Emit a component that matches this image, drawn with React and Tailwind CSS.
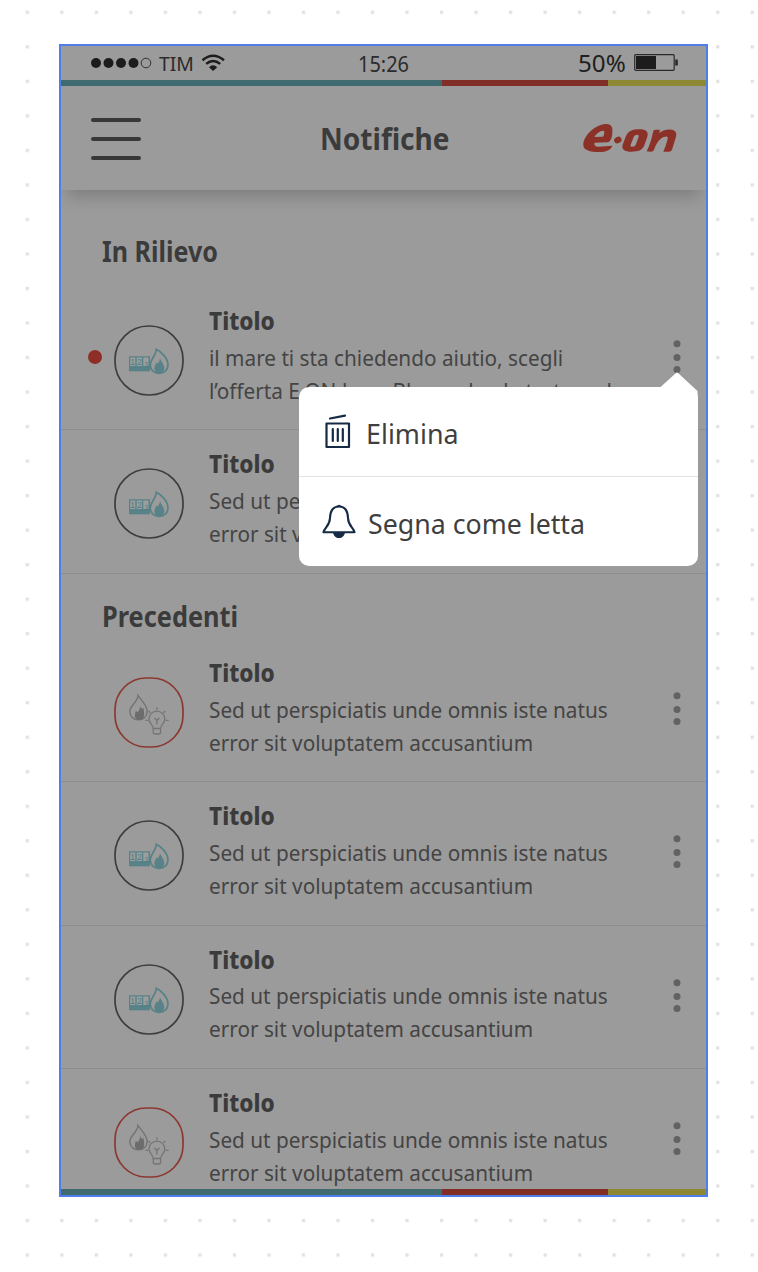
const sed = ["Sed ut perspiciatis unde omnis iste natus", "error sit voluptatem accusantium"];
const rowsTop = [
  { kind: "meter", unread: true, lines: ["il mare ti sta chiedendo aiutio, scegli", "l’offerta E.ON Luce Blu e salvada tartarughe"] },
  { kind: "meter", lines: sed },
];
const rowsPast = [
  { kind: "bulb", lines: sed },
  { kind: "meter", lines: sed },
  { kind: "meter", lines: sed },
  { kind: "bulb", lines: sed },
];

function MeterIcon() {
  return (
    <svg width="70" height="71" viewBox="0 0 70 71" fill="none">
      <rect x="1" y="1" width="68" height="69" rx="33.5" stroke="#3d3d3d" strokeWidth="1.7" />
      <path d="M15 31.300H36V46.300H15Z" fill="#578287" />
      <path d="M16.300 32.600h5v8.400h-5zM22.700 32.600h5.200v8.400h-5.200zM29.300 32.600h5.200v8.400h-5.200z" fill="#9b9fa0" />
      <g fill="#4f7d82" fontSize="8.500" fontFamily="Liberation Sans, sans-serif">
        <text x="16.300" y="40">1</text>
        <text x="22.900" y="40">2</text>
        <text x="30.500" y="41.600" fontSize="6.500">3</text>
      </g>
      <path d="M42.300 24.300C47 26.500 54 33 54 40c0 5-4 8.300-8.900 8.300S36.300 45 36.300 40C36.300 34.500 42.300 30 42.300 24.300Z" stroke="#578287" strokeWidth="1.700" fill="#9b9b9b" />
      <path d="M46 33c.5 3 4.300 6 4.300 10.300 0 2.700-2 5-5 5s-5-2.300-4.900-5c.1-2.300 1.400-4 2.300-6l1.100 1.300c1-1.300 1.900-3 2.200-5.600Z" fill="#578287" />
    </svg>
  );
}

function BulbIcon() {
  return (
    <svg width="70" height="71" viewBox="0 0 70 71" fill="none">
      <rect x="1" y="1" width="68" height="69" rx="31.5" stroke="#8c3830" strokeWidth="1.700" />
      <path d="M24 18.500C26 22 33.200 28 33.200 34.500c0 5-3.900 8.400-8.800 8.400s-8.500-3.400-8.500-8.400c0-6 7.900-9.500 8.100-16Z" stroke="#737373" strokeWidth="1.400" />
      <path d="M26.500 28c0 2.500 1.300 4 1.800 4l1-1.500c.3 2 1 4.500.9 7.500-.1 3-2 4.800-4.900 4.800s-4.600-1.800-4.400-4.500c.1-2 .7-3.100.9-4.500l1.700 1.400c1.800-1.500 2.700-4 3-7.200Z" fill="#6c6c6c" />
      <g stroke="#757575" strokeWidth="1.300">
        <path d="M39.200 51.500c0-3.500-4.200-5-4.200-9.500a7.900 7.900 0 0 1 15.800 0c0 4.500-4.200 6-4.200 9.500ZM39.200 51.500v3.500q0 2 2 2h3.400q2 0 2-2v-3.500M40.400 41l2.500 2.500 2.500-2.500M42.900 43.500v4M42.900 30.200v2.600M34.500 34l1.800 1.800M51.300 34l-1.800 1.800M31.500 43.300h2.700M51.800 43.300h2.900" />
      </g>
    </svg>
  );
}

function Logo() {
  return (
    <svg width="104" height="40" viewBox="0 0 312 120" fill="#8b3128" fillRule="evenodd">
      <path d="M16 78C18 50 55 18 86 18C101 18 105 30 103 44C102 60 98 71 88 73L50 74C47 81 52 86 62 86L103 83C99 96 83 102 65 102C35 102 14 97 16 78ZM49 57C54 47 68 37 76 38C81 39 79 50 75 56Z" />
      <ellipse cx="119.500" cy="66" rx="11.500" ry="9.500" transform="rotate(-25 119.500 66)" />
      <path d="M143 56C150 39 164 34 184 34C205 34 212 42 208 56L199 82C193 98 180 101 160 101C140 101 130 94 134 80ZM168 55Q170 50 178 50Q184 50 182 56L173 81Q171 86 163 86Q156 86 158 80Z" />
      <path d="M226 38Q228 35 234 35L246 35L243 45C256 36 270 33 280 35C293 37 297 45 294 56L282 95Q280 101 272 101L256 101Q263 86 269 63C271 54 265 54 257 57C243 63 235 76 228 95Q226 101 219 101L206 100Q219 74 226 38Z" />
    </svg>
  );
}

function Row({ item, last }) {
  return (
    <div className={last ? "relative flex h-[143.3px] shrink-0" : "relative flex h-[143.3px] shrink-0 border-b-[1.5px] border-[#8d8d8d]"}>
      <div className="flex w-[53px] shrink-0 justify-center pt-[63px] pl-[15px]">
        {item.unread && <span className="size-[14px] rounded-full bg-[#8e2f27]" />}
      </div>
      <div className="w-[95px] shrink-0 pt-[38px]">{item.kind === "meter" ? <MeterIcon /> : <BulbIcon />}</div>
      <div className="w-[415px] shrink-0 pt-[17px] whitespace-nowrap text-[#444]">
        <div className="h-[36.800px] origin-left scale-x-[0.94] text-[24px] leading-[34px] font-extrabold text-[#3b3b3b]">Titolo</div>
        {item.lines.map((line) => (
          <div key={line} className="h-[33px] w-[470px] origin-left scale-x-[0.943] text-[22px] leading-[33px]">{line}</div>
        ))}
      </div>
      <svg className="mt-[50px] ml-[48px] shrink-0" width="10" height="40" fill="#626262">
        <circle cx="5" cy="6.700" r="3.500" />
        <circle cx="5" cy="20.500" r="3.500" />
        <circle cx="5" cy="32.500" r="3.500" />
      </svg>
    </div>
  );
}

function Stripe({ className }) {
  return (
    <div className={className}>
      <div className="w-[381px] bg-[#3f6b70]" />
      <div className="w-[166px] bg-[#812e27]" />
      <div className="flex-1 bg-[#8c8834]" />
    </div>
  );
}

export default function App() {
  return (
    <div className="relative h-[1272px] w-[758px] overflow-hidden bg-white pt-[44px] pl-[59px] font-['Noto_Sans',sans-serif]">
      <svg className="absolute inset-0" width="758" height="1272">
        <defs>
          <pattern id="dots" x="25.700" y="10.700" width="34.520" height="34.520" patternUnits="userSpaceOnUse">
            <rect width="3.300" height="3.300" fill="#e2e2e2" />
          </pattern>
        </defs>
        <rect x="20" y="5" width="738" height="1267" fill="url(#dots)" />
      </svg>
      <div className="relative flex h-[1153px] w-[649px] flex-col overflow-hidden border-2 border-[#4f7eea] bg-[#9b9b9b]">
        <div className="relative z-10 shrink-0 bg-[#9b9b9b] shadow-[0_12px_16px_-6px_rgba(0,0,0,0.2)]">
          <div className="flex h-[33.500px] items-center text-[#202020]">
            <svg className="ml-[30px]" width="62" height="14" fill="#1c1c1c">
              <circle cx="5" cy="7" r="5" />
              <circle cx="17.500" cy="7" r="5" />
              <circle cx="30" cy="7" r="5" />
              <circle cx="42.500" cy="7" r="5" />
              <circle cx="55" cy="7" r="4.800" fill="none" stroke="#333" />
            </svg>
            <div className="ml-[6px] w-[42px] origin-left scale-x-[0.97] pt-[3px] text-[20px] leading-[30px] text-[#2b2b2b]">TIM</div>
            <svg width="24" height="17" viewBox="0 0 24 17" fill="none" stroke="#1c1c1c" strokeWidth="2.500">
              <path d="M1.500 6.200Q12-2.600 23 6.200M5.200 9.900Q12 4 19.200 9.900" />
              <path d="M8 13.200Q12 9.500 16.200 13.200L12.100 17Z" fill="#1c1c1c" stroke="none" />
            </svg>
            <div className="ml-[133px] w-[220px] origin-left scale-x-[0.95] pt-[2px] text-[21px] leading-[30px] text-[#2b2b2b]">15:26</div>
            <div className="w-[56px] origin-left scale-x-[1.05] text-[23px] leading-[30px]">50%</div>
            <svg width="44" height="17" fill="none" stroke="#2a2a2a">
              <rect x=".7" y=".7" width="39.500" height="15.600" rx="1" strokeWidth="1.200" />
              <rect x="2" y="2" width="20" height="13" fill="#1c1c1c" stroke="none" />
              <path d="M42.500 5.500v6" strokeWidth="2.600" />
            </svg>
          </div>
          <Stripe className="flex h-[6.500px]" />
          <div className="flex h-[104px] items-center">
            <div className="mt-px ml-[30px] flex w-[50px] flex-col gap-[15px]">
              <div className="h-[4px] rounded-full bg-[#383838]" />
              <div className="h-[4px] rounded-full bg-[#383838]" />
              <div className="h-[4px] rounded-full bg-[#383838]" />
            </div>
            <div className="ml-[179px] w-[258px] origin-left scale-x-[0.905] text-[31px] leading-[44px] font-bold text-[#3b3b3b]">Notifiche</div>
            <Logo />
          </div>
        </div>
        <div className="h-[97.200px] shrink-0 pt-[37px] pl-[41px] text-[28px] leading-[48px] font-bold text-[#3b3b3b]">
          <div className="origin-left scale-x-[0.895]">In Rilievo</div>
        </div>
        {rowsTop.map((r, i) => <Row key={i} item={r} />)}
        <div className="h-[65.300px] shrink-0 pt-[18.500px] pl-[41px] text-[28px] leading-[48px] font-bold text-[#3b3b3b]">
          <div className="origin-left scale-x-[0.905]">Precedenti</div>
        </div>
        {rowsPast.map((r, i) => <Row key={i} item={r} last={i === 3} />)}
        <Stripe className="absolute inset-x-0 bottom-0 flex h-[6px]" />
        <div className="absolute top-[341px] left-[238px] z-20 h-[179px] w-[399px] rounded-[10px] bg-white text-[#3f3f3f]">
          <svg className="absolute -top-[15px] right-0" width="38" height="24" fill="#fff">
            <path d="M16 1Q17 0 18 1L37.500 19V24H0V15.500Z" />
          </svg>
          <div className="flex h-[90px] items-center border-b-[1.500px] border-[#e3e3e3]">
            <svg className="ml-[25px]" width="28" height="36" viewBox="0 0 28 36" fill="none" stroke="#152a44" strokeWidth="2.200" strokeLinecap="round" strokeLinejoin="round">
              <path d="M6 4.500L21 1.700M2.500 9.500H25V33H2.500ZM8.800 15v12M13.800 15v12M18.800 15v12" />
            </svg>
            <div className="mt-[2px] ml-[14px] origin-left scale-x-[0.96] text-[28px]">Elimina</div>
          </div>
          <div className="flex h-[89px] items-center">
            <svg className="ml-[23px]" width="34" height="36" viewBox="0 0 34 36" fill="none" stroke="#152a44" strokeWidth="2.100" strokeLinejoin="round">
              <path d="M17 2.500C10.500 2.500 8.200 8 8 14c-.2 8-5.500 9.500-6.500 14.300H32.500C31.500 23.500 26.200 22 26 14 25.800 8 23.500 2.500 17 2.500Z" />
              <path d="M11 28h12c-.5 4-3 6-6 6s-5.500-2-6-6ZM14.500 2.800Q17-1.200 19.500 2.800Z" fill="#152a44" stroke="none" />
            </svg>
            <div className="mt-[2px] ml-[12px] origin-left scale-x-[0.955] text-[28px]">Segna come letta</div>
          </div>
        </div>
      </div>
    </div>
  );
}
